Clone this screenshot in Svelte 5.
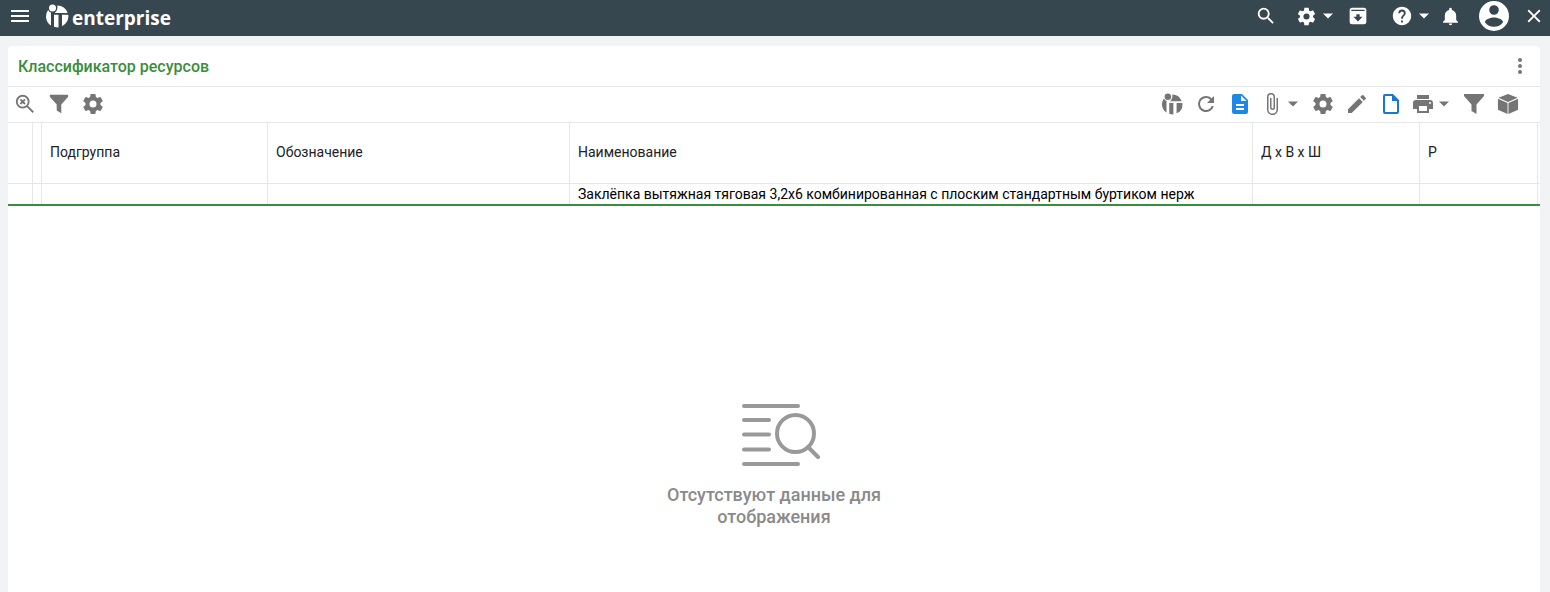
<script>
  const columns = ['Подгруппа', 'Обозначение', 'Наименование', 'Д x В x Ш', 'Р'];
  const filters = $state(['', '', 'Заклёпка вытяжная тяговая 3,2х6 комбинированная с плоским стандартным буртиком нерж', '', '']);

  const icons = {
    search: 'M15.5 14h-.79l-.28-.27A6.47 6.47 0 0 0 16 9.5 6.5 6.5 0 1 0 9.500 16c1.610 0 3.090-.59 4.230-1.570l.27.28v.79l5 4.990L20.490 19l-4.990-5zm-6 0C7.010 14 5 11.990 5 9.500S7.010 5 9.500 5 14 7.010 14 9.500 11.990 14 9.500 14z',
    gear: 'M19.430 12.980c.04-.32.07-.64.07-.98s-.03-.66-.07-.98l2.110-1.650c.19-.15.24-.42.12-.64l-2-3.460c-.12-.22-.39-.3-.61-.22l-2.490 1c-.52-.4-1.080-.73-1.690-.98l-.38-2.650C14.460 2.180 14.250 2 14 2h-4c-.25 0-.46.18-.49.42l-.38 2.650c-.61.25-1.170.59-1.690.98l-2.490-1c-.23-.09-.49 0-.61.22l-2 3.460c-.13.22-.07.49.12.64l2.110 1.650c-.04.32-.07.65-.07.98s.03.66.07.98l-2.110 1.650c-.19.15-.24.42-.12.64l2 3.460c.12.22.39.3.61.22l2.490-1c.52.4 1.080.73 1.690.98l.38 2.650c.03.24.24.42.49.42h4c.25 0 .46-.18.49-.42l.38-2.650c.61-.25 1.170-.59 1.690-.98l2.490 1c.23.09.49 0 .61-.22l2-3.460c.12-.22.07-.49-.12-.64l-2.110-1.650zM12 15.500a3.500 3.500 0 1 1 0-7 3.500 3.500 0 0 1 0 7z',
    caret: 'M2 7h20L12 17z',
    archive: 'M5 2h14a3 3 0 0 1 3 3v14a3 3 0 0 1-3 3H5a3 3 0 0 1-3-3V5a3 3 0 0 1 3-3zm-1 2.500v1.500h16V4.500zM10 10v3H6.500l5.500 5.500 5.500-5.500H14v-3z',
    help: 'M12 2C6.480 2 2 6.480 2 12s4.480 10 10 10 10-4.480 10-10S17.520 2 12 2zm1 17h-2v-2h2v2zm2.070-7.750l-.9.92C13.450 12.900 13 13.500 13 15h-2v-.5c0-1.100.45-2.100 1.170-2.830l1.240-1.260c.37-.36.59-.86.59-1.410a2 2 0 0 0-4 0H8a4 4 0 0 1 8 0c0 .88-.36 1.680-.93 2.250z',
    bell: 'M12 22a2 2 0 0 0 2-2h-4a2 2 0 0 0 2 2zm6.500-6v-5c0-3.070-2-5.640-5-6.320V3.500a1.500 1.500 0 0 0-3 0v1.180C7.500 5.360 5.500 7.920 5.500 11v5L3.500 18v1h17v-1l-2-2z',
    user: 'M12 2a10 10 0 1 0 0 20 10 10 0 0 0 0-20zm0 2.800a3.200 3.200 0 1 1 0 6.400 3.200 3.200 0 0 1 0-6.400zM12 19.200c-2.500 0-4.700-1.200-6-3.100.03-2 4-3.100 6-3.100s5.970 1.100 6 3.100c-1.300 1.900-3.500 3.100-6 3.100z',
    close: 'M19 6.410L17.590 5 12 10.590 6.410 5 5 6.410 10.590 12 5 17.590 6.410 19 12 13.410 17.590 19 19 17.590 13.410 12z',
    funnel: 'M2 2h20v2l-7.500 8.500V22l-5-3v-6.500L2 4z',
    refresh: 'M17.650 6.350A7.960 7.960 0 0 0 12 4a8 8 0 1 0 7.730 10h-2.080A6 6 0 1 1 12 6c1.660 0 3.140.69 4.220 1.780L13 11h7V4l-2.350 2.350z',
    doc: 'M14 2H6a2 2 0 0 0-2 2v16a2 2 0 0 0 2 2h12a2 2 0 0 0 2-2V8l-6-6zm2 16H8v-2h8v2zm0-4H8v-2h8v2zm-3-5V3.500L18.500 9H13z',
    page: 'M14 2H6a2 2 0 0 0-2 2v16a2 2 0 0 0 2 2h12a2 2 0 0 0 2-2V8l-6-6zM6 20V4h7v5h5v11H6z',
    clip: 'M16.500 6v11.500a4 4 0 0 1-8 0V5a2.500 2.500 0 0 1 5 0v10.500a1 1 0 0 1-2 0V6H10v9.500a2.500 2.500 0 0 0 5 0V5a4 4 0 0 0-8 0v12.500a5.500 5.500 0 0 0 11 0V6h-1.500z',
    pencil: 'M3 17.250V21h3.750L17.810 9.940l-3.750-3.750L3 17.250zM20.710 7.040a1 1 0 0 0 0-1.410l-2.340-2.340a1 1 0 0 0-1.410 0l-1.830 1.830 3.750 3.750 1.830-1.830z',
    print: 'M19 8H5a3 3 0 0 0-3 3v6h4v4h12v-4h4v-6a3 3 0 0 0-3-3zm-3 11H8v-5h8v5zm3-7a1 1 0 1 1 0-2 1 1 0 0 1 0 2zM18 3H6v4h12V3z',
    dots: 'M12 8a2 2 0 1 0 0-4 2 2 0 0 0 0 4zm0 2a2 2 0 1 0 0 4 2 2 0 0 0 0-4zm0 6a2 2 0 1 0 0 4 2 2 0 0 0 0-4z'
  };

  const tools = [
    { icon: 'brand', label: 'IT-Enterprise', size: 22 },
    { icon: 'refresh', label: 'Обновить' },
    { icon: 'doc', label: 'Документ', tone: 'solid-blue' },
    { icon: 'clip', label: 'Вложения', menu: true },
    { icon: 'gear', label: 'Настройки' },
    { icon: 'pencil', label: 'Редактировать' },
    { icon: 'page', label: 'Создать', tone: 'line-blue' },
    { icon: 'print', label: 'Печать', menu: true },
    { icon: 'funnel', label: 'Фильтр' },
    { icon: 'cube', label: 'Модель', size: 22 }
  ];
</script>

{#snippet icon(name, size = 24)}
  <svg width={size} height={size} viewBox="0 0 24 24" fill="currentColor" fill-rule="evenodd" aria-hidden="true">
    {#if name === 'brand'}
      <circle cx="7.500" cy="4" r="3.500" />
      <path d="M3.100 6Q4.300 8.200 6 8.600V21.600A11 11 0 0 1 3.100 6z" />
      <path d="M12.300 1.500A11 11 0 0 1 22.600 9H9.700Q13 6 12.300 1.500z" />
      <path d="M9 10.800h4.500v12.700a11 11 0 0 1-4.500-.8zM17 10.800h6.300a11 11 0 0 1-6.300 11.400z" />
    {:else if name === 'cube'}
      <path d="M12 1l10.500 4.200L12 9.700 1.500 5.200zM1 6.400l10.500 4.400V23L1 18.200zM23 6.400v11.800L12.500 23V10.800z" />
    {:else if name === 'clear-search'}
      <g fill="none" stroke="currentColor" stroke-width="2">
        <circle cx="9.500" cy="9.500" r="6.500" /><path d="M14 14l7 7M7 7l5 5M12 7l-5 5" />
      </g>
    {:else if name === 'menu'}
      <path d="M3 6h18v2H3zm0 5h18v2H3zm0 5h18v2H3z" />
    {:else}
      <path d={icons[name]} />
    {/if}
  </svg>
{/snippet}

{#snippet button(name, label, size = 24, cls = '')}
  <button type="button" class={cls} aria-label={label}>{@render icon(name, size)}</button>
{/snippet}

<div class="app">
  <header class="topbar">
    {@render button('menu', 'Меню', 24, 'menu')}
    <a class="brand" href="#home">
      {@render icon('brand', 24)}
      <span>enterprise</span>
    </a>
    <div class="actions">
      {@render button('search', 'Поиск', 22)}
      <div class="split">
        {@render button('gear', 'Настройки', 21)}
        {@render button('caret', 'Меню настроек', 12, 'caret')}
      </div>
      {@render button('archive', 'Архив', 20)}
      <div class="split help">
        {@render button('help', 'Справка', 22)}
        {@render button('caret', 'Меню справки', 12, 'caret')}
      </div>
      {@render button('bell', 'Уведомления', 21)}
      {@render button('user', 'Профиль', 36, 'avatar')}
      {@render button('close', 'Закрыть', 22)}
    </div>
  </header>

  <main class="panel">
    <div class="title">
      <h1>Классификатор ресурсов</h1>
      {@render button('dots', 'Ещё', 24)}
    </div>

    <div class="toolbar">
      <div class="tools">
        {@render button('clear-search', 'Сбросить поиск', 22)}
        {@render button('funnel', 'Фильтр', 22)}
        {@render button('gear', 'Настройки таблицы', 24)}
      </div>
      <div class="tools">
        {#each tools as t}
          {#if t.menu}
            <div class="pair">
              {@render button(t.icon, t.label, 24)}
              {@render button('caret', t.label + ': меню', 12, 'caret')}
            </div>
          {:else}
            {@render button(t.icon, t.label, t.size ?? 24, t.tone)}
          {/if}
        {/each}
      </div>
    </div>

    <table>
      <colgroup>
        <col class="mark" /><col class="handle" /><col class="group" /><col class="code" /><col /><col class="dims" /><col class="last" /><col class="edge" />
      </colgroup>
      <thead>
        <tr>
          <td></td><td></td>
          {#each columns as c}<th scope="col">{c}</th>{/each}
          <td></td>
        </tr>
      </thead>
      <tbody>
        <tr>
          <td></td><td></td>
          {#each columns as c, i}
            <td><input type="text" aria-label={c} bind:value={filters[i]} /></td>
          {/each}
          <td></td>
        </tr>
      </tbody>
    </table>

    <section class="empty">
      <svg width="80" height="64" viewBox="0 0 80 64" fill="none" stroke="currentColor" stroke-width="4" stroke-linecap="round" aria-hidden="true">
        <path d="M3 3h54M3 17h25M3 31.500h25M3 46.500h25M3 61h54M67 44l10 10" />
        <circle cx="54.500" cy="30.500" r="18.500" />
      </svg>
      <p>Отсутствуют данные для отображения</p>
    </section>
  </main>
</div>

<style>
  :global(body) { margin: 0; background: #f1f3f4; }
  .app {
    min-height: 100vh;
    display: flex;
    flex-direction: column;
    font-family: Roboto, "Noto Sans", sans-serif;
    font-size: 14px;
    color: #212121;
  }
  button {
    display: flex;
    align-items: center;
    justify-content: center;
    flex: none;
    padding: 0;
    border: 0;
    background: none;
    color: inherit;
    cursor: pointer;
  }
  svg { display: block; flex: none; }

  .topbar {
    height: 36px;
    box-sizing: border-box;
    display: flex;
    align-items: center;
    padding: 0 4px 4px 8px;
    background: #37474f;
    color: #fff;
  }
  .brand {
    display: flex;
    align-items: center;
    gap: 3px;
    margin-left: 13px;
    color: #fff;
    text-decoration: none;
    font: 700 19px/24px "Open Sans", sans-serif;
  }
  .brand span { padding-top: 4px; }
  .menu { width: 24px; }
  .actions { display: flex; align-items: center; margin-left: auto; }
  .actions button { width: 24px; height: 24px; }
  .split { display: flex; gap: 4px; margin: 0 12px 0 16px; }
  .split.help { margin: 0 8px 0 20px; }
  .actions .caret { width: 12px; }
  .actions .avatar { width: 36px; height: 32px; margin: 0 10px 0 14px; }

  .panel {
    flex: 1;
    display: flex;
    flex-direction: column;
    margin: 10px 10px 0 8px;
    background: #fff;
    border-radius: 4px 4px 0 0;
  }
  .title {
    height: 40px;
    display: flex;
    align-items: center;
    justify-content: space-between;
    padding: 0 8px 0 10px;
    border-bottom: 1px solid #e6e7e8;
  }
  h1 { margin: 0; padding-top: 2px; font-size: 16px; line-height: 24px; font-weight: 500; color: #388e3c; }
  .title button { color: #757575; }
  .toolbar {
    height: 35px;
    display: flex;
    align-items: flex-start;
    justify-content: space-between;
    padding: 0 15px 0 0;
    color: #757575;
  }
  .tools { display: flex; align-items: center; }
  .tools button { width: 34px; height: 34px; }
  .pair { display: flex; margin-right: 7px; }
  .pair button { width: 30px; }
  .tools .caret { width: 12px; }
  .tools :global(.solid-blue) { color: #1e88e5; }
  .tools :global(.line-blue) { color: #1976d2; }

  table {
    width: 100%;
    table-layout: fixed;
    border-collapse: separate;
    border-spacing: 0;
    border-top: 1px solid #e6e7e8;
    border-bottom: 2px solid #388e3c;
  }
  .mark { width: 25px; }
  .handle { width: 9px; }
  .group { width: 226px; }
  .code { width: 302px; }
  .dims { width: 167px; }
  .last { width: 118px; }
  .edge { width: 2px; }
  th, td { padding: 0; border-right: 1px solid #e6e7e8; }
  th:last-child, td:last-child { border-right: 0; }
  thead th, thead td { height: 60px; border-bottom: 1px solid #e6e7e8; }
  thead th { height: 58px; padding: 0 8px 2px; text-align: left; font-weight: 400; }
  tbody td { height: 20px; }
  input {
    display: block;
    width: 100%;
    height: 20px;
    box-sizing: border-box;
    padding: 0 8px;
    border: 0;
    outline: 0;
    background: none;
    font: inherit;
    color: #000;
  }

  .empty {
    flex: 1;
    display: flex;
    flex-direction: column;
    align-items: center;
    gap: 17px;
    padding: 197px 0 48px 14px;
    color: #999;
  }
  .empty p {
    width: 240px;
    margin: 0 14px 0 0;
    text-align: center;
    font-size: 18px;
    line-height: 22px;
    font-weight: 500;
    color: #8a8a8a;
  }
</style>
